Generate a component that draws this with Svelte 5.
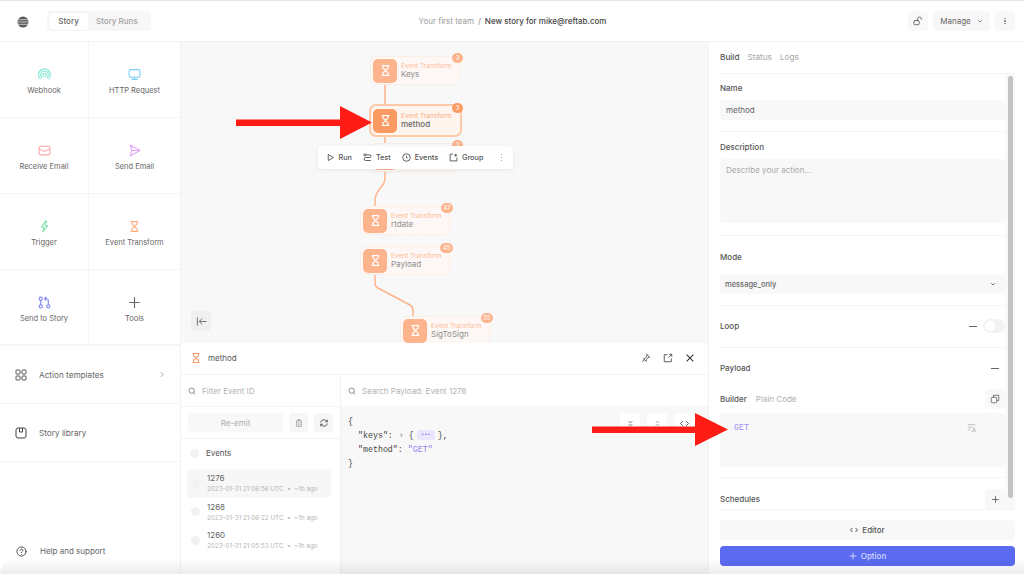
<script lang="ts">
	// Action palette, left sidebar
	const actions = [
		{ label: 'Webhook', icon: 'webhook', color: '#7fe6d2' },
		{ label: 'HTTP Request', icon: 'http', color: '#79cdf7' },
		{ label: 'Receive Email', icon: 'mail', color: '#fba6a6' },
		{ label: 'Send Email', icon: 'send', color: '#e3a6f7' },
		{ label: 'Trigger', icon: 'bolt', color: '#7fe3ad' },
		{ label: 'Event Transform', icon: 'hourglass', color: '#fdab7d' },
		{ label: 'Send to Story', icon: 'story', color: '#7d87ee' },
		{ label: 'Tools', icon: 'plus', color: '#666' }
	];

	// Nodes on the canvas, coordinates relative to the canvas
	// The third node sits under the toolbar, so its text can't be read
	const nodes = [
		{ name: 'Keys', x: 189, y: 14, badge: '3' },
		{ name: 'method', x: 189, y: 64, badge: '3', selected: true },
		{ name: '', x: 189, y: 101, badge: '3' },
		{ name: 'rtdate', x: 179, y: 164, badge: '47' },
		{ name: 'Payload', x: 179, y: 204, badge: '45' },
		{ name: 'SigToSign', x: 219, y: 274, badge: '55' }
	];

	const events = [
		{ id: '1276', time: '2023-01-31 21:06:56 UTC', active: true },
		{ id: '1268', time: '2023-01-31 21:06:22 UTC', active: false },
		{ id: '1260', time: '2023-01-31 21:05:53 UTC', active: false }
	];
</script>

{#snippet hourglass(color: string, size: number)}
	<svg width={size} height={size} viewBox="0 0 24 24" fill="none" stroke={color} stroke-width="2.2" stroke-linecap="round" stroke-linejoin="round">
		<path d="M6 3h12M6 21h12M7 3v3.5c0 2 5 4 5 5.500s-5 3.500-5 5.500V21M17 3v3.500c0 2-5 4-5 5.500s5 3.500 5 5.500V21" />
	</svg>
{/snippet}

{#snippet actionIcon(name: string, color: string)}
	<svg width="13" height="13" viewBox="0 0 24 24" fill="none" stroke={color} stroke-width="2" stroke-linecap="round" stroke-linejoin="round">
		{#if name === 'webhook'}
			<path d="M4 20a11 11 0 1 1 16 0M7.500 18a7 7 0 1 1 9 0M10.500 15.500a3 3 0 1 1 3 0" />
		{:else if name === 'http'}
			<rect x="2" y="3" width="20" height="14" rx="3" />
			<path d="M12 17v4M7 21h10" />
		{:else if name === 'mail'}
			<rect x="2" y="4" width="20" height="16" rx="3" />
			<path d="M2 9l10 5 10-5" />
		{:else if name === 'send'}
			<path d="M4 2l18 10L4 22l3-10zM7 12h15" />
		{:else if name === 'bolt'}
			<path d="M14 2L6 13h5l-2 9 9-12h-5l3-8z" />
		{:else if name === 'hourglass'}
			<path d="M6 3h12M6 21h12M7 3v3.500c0 2 5 4 5 5.500s-5 3.500-5 5.500V21M17 3v3.500c0 2-5 4-5 5.500s5 3.500 5 5.500V21" />
		{:else if name === 'story'}
			<circle cx="5" cy="5" r="3" />
			<circle cx="5" cy="19" r="3" />
			<circle cx="19" cy="19" r="3" />
			<path d="M5 8v8M19 16V8c0-2-1-3-3-3h-3M15 2l-3 3 3 3" />
		{:else}
			<path d="M12 3v18M3 12h18" />
		{/if}
	</svg>
{/snippet}

<div class="app">
	<header class="topbar">
		<div class="top-left">
			<svg class="logo" width="12" height="12" viewBox="0 0 12 12">
				<circle cx="6" cy="6" r="5.500" fill="#5a5a5a" />
				<path d="M1 3.700h10M.5 6h11M1 8.300h10" stroke="#ddd" stroke-width=".8" />
			</svg>
			<div class="segment">
				<span class="seg active">Story</span>
				<span class="seg">Story Runs</span>
			</div>
		</div>
		<div class="crumb">
			<span class="team">Your first team</span>
			<span class="slash">/</span>
			<span class="story">New story for mike@reftab.com</span>
		</div>
		<div class="top-right">
			<span class="square">
				<svg width="10" height="10" viewBox="0 0 24 24" fill="none" stroke="#555" stroke-width="2" stroke-linecap="round">
					<rect x="2" y="11" width="13" height="10" rx="3" />
					<path d="M11 11V7a4.500 4.500 0 0 1 9 0v1" />
				</svg>
			</span>
			<span class="manage">Manage
				<svg width="6" height="6" viewBox="0 0 12 12" fill="none" stroke="#777" stroke-width="1.800"><path d="M2.500 4.500L6 8l3.500-3.500" /></svg>
			</span>
			<span class="square dots"><i></i><i></i><i></i></span>
		</div>
	</header>

	<div class="body">
		<aside class="sidebar">
			<div class="palette">
				{#each actions as action}
					<div class="action">
						{@render actionIcon(action.icon, action.color)}
						<span>{action.label}</span>
					</div>
				{/each}
			</div>
			<div class="side-row">
				<svg width="12" height="12" viewBox="0 0 24 24" fill="none" stroke="#555" stroke-width="2">
					<rect x="2" y="2" width="8" height="8" rx="1.500" />
					<rect x="14" y="2" width="8" height="8" rx="1.500" />
					<rect x="2" y="14" width="8" height="8" rx="1.500" />
					<rect x="14" y="14" width="8" height="8" rx="1.500" />
				</svg>
				<span>Action templates</span>
				<svg class="chev" width="6" height="7" viewBox="0 0 8 12" fill="none" stroke="#999" stroke-width="1.500"><path d="M2 2l4 4-4 4" /></svg>
			</div>
			<div class="side-row">
				<svg width="12" height="12" viewBox="0 0 24 24" fill="none" stroke="#444" stroke-width="2">
					<rect x="2" y="2" width="20" height="20" rx="4" />
					<path d="M9 2v8h6V2" />
				</svg>
				<span>Story library</span>
			</div>
			<div class="help">
				<svg width="11" height="11" viewBox="0 0 24 24" fill="none" stroke="#444" stroke-width="2" stroke-linecap="round">
					<circle cx="12" cy="12" r="10" />
					<path d="M9 9.500a3 3 0 1 1 4.500 2.600c-1 .6-1.500 1.200-1.500 2.400M12 18v.1" />
				</svg>
				<span>Help and support</span>
			</div>
		</aside>

		<main class="center">
			<section class="canvas">
				<svg class="edges" width="527" height="301" fill="none" stroke="#fdb48c" stroke-width="1.500">
					<path d="M204 40v97c0 8-10 10-10 22v30" />
					<path d="M194 230v11c0 3 1 4 3 5l32 17c2 1 3 3 3 5v12" />
				</svg>
				{#each nodes as node}
					<div class="node" class:selected={node.selected} style="left: {node.x}px; top: {node.y}px">
						<span class="node-icon">{@render hourglass('#fff', 13)}</span>
						{#if node.name}
							<div class="node-text">
								<span class="node-type">Event Transform</span>
								<span class="node-name">{node.name}</span>
							</div>
						{/if}
						<span class="node-badge">{node.badge}</span>
					</div>
				{/each}
				<div class="toolbar">
					<span class="tool">
						<svg width="9" height="9" viewBox="0 0 24 24" fill="none" stroke="#444" stroke-width="2.200" stroke-linejoin="round"><path d="M6 4l14 8-14 8z" /></svg>Run
					</span>
					<span class="tool">
						<svg width="9" height="9" viewBox="0 0 24 24" fill="none" stroke="#444" stroke-width="2.200"><circle cx="5" cy="5" r="3" /><path d="M8 5h10a3 3 0 0 1 0 7H7a4 4 0 0 0 0 8h14" /></svg>Test
					</span>
					<span class="tool">
						<svg width="9" height="9" viewBox="0 0 24 24" fill="none" stroke="#444" stroke-width="2.200"><circle cx="12" cy="12" r="10" /><path d="M12 7v6h3" /></svg>Events
					</span>
					<span class="tool">
						<svg width="9" height="9" viewBox="0 0 24 24" fill="none" stroke="#444" stroke-width="2.200"><path d="M11 3H3v18h18v-9M18 2v8M14 6h8" /></svg>Group
					</span>
					<span class="tool-dots"><i></i><i></i><i></i></span>
				</div>
				<span class="collapse">
					<svg width="11" height="11" viewBox="0 0 24 24" fill="none" stroke="#666" stroke-width="2" stroke-linecap="round"><path d="M3 4v16M22 12H8M13 6l-6 6 6 6" /></svg>
				</span>
			</section>

			<section class="panel">
				<div class="panel-head">
					<div class="panel-title">
						{@render hourglass('#fb9a66', 12)}
						<span>method</span>
					</div>
					<div class="panel-actions">
						<svg width="10" height="10" viewBox="0 0 24 24" fill="none" stroke="#444" stroke-width="2" stroke-linejoin="round"><path d="M14 3l7 7-4 1-4 5-1 4-6-6 4-1 4-5zM8 16l-5 5" /></svg>
						<svg width="10" height="10" viewBox="0 0 24 24" fill="none" stroke="#444" stroke-width="2"><path d="M11 4H3v17h17v-8M13 11l8-8M15 3h6v6" /></svg>
						<svg width="10" height="10" viewBox="0 0 24 24" fill="none" stroke="#333" stroke-width="2.600"><path d="M4 4l16 16M20 4L4 20" /></svg>
					</div>
				</div>
				<div class="panel-body">
					<div class="events">
						<div class="search">
							<svg width="8" height="8" viewBox="0 0 24 24" fill="none" stroke="#777" stroke-width="2.500"><circle cx="11" cy="11" r="8" /><path d="M17 17l5 5" /></svg>
							<span>Filter Event ID</span>
						</div>
						<div class="emit-row">
							<span class="emit">Re-emit</span>
							<span class="mini">
								<svg width="8" height="8" viewBox="0 0 24 24" fill="none" stroke="#999" stroke-width="2.500"><path d="M5 5h14v17H5zM9 5V2h6v3M9 11h6M9 16h6" /></svg>
							</span>
							<span class="mini">
								<svg width="10" height="10" viewBox="0 0 24 24" fill="none" stroke="#555" stroke-width="2.200"><path d="M4 11a8 8 0 0 1 14-4l2 2M20 13a8 8 0 0 1-14 4l-2-2M20 4v5h-5M4 20v-5h5" /></svg>
							</span>
						</div>
						<div class="events-head"><i class="radio"></i><span>Events</span></div>
						<div class="event-list">
							{#each events as event}
								<div class="event" class:active={event.active}>
									<i class="radio"></i>
									<div class="event-text">
										<span class="event-id">{event.id}</span>
										<span class="event-time">{event.time} &nbsp;•&nbsp; ~1h ago</span>
									</div>
								</div>
							{/each}
						</div>
					</div>
					<div class="payload">
						<div class="search">
							<svg width="8" height="8" viewBox="0 0 24 24" fill="none" stroke="#777" stroke-width="2.500"><circle cx="11" cy="11" r="8" /><path d="M17 17l5 5" /></svg>
							<span>Search Payload: Event 1276</span>
						</div>
						<div class="json">
							<div class="json-tools">
								<span>
									<svg width="7" height="7" viewBox="0 0 12 12" fill="none" stroke="#444" stroke-width="1.300"><path d="M3 2l3 3 3-3M3 7l3 3 3-3" /></svg>
								</span>
								<span>
									<svg width="7" height="7" viewBox="0 0 12 12" fill="none" stroke="#888" stroke-width="1.300"><path d="M3 5l3-3 3 3M3 10l3-3 3 3" /></svg>
								</span>
								<span>
									<svg width="9" height="7" viewBox="0 0 16 12" fill="none" stroke="#333" stroke-width="1.500"><path d="M5 2L1 6l4 4M11 2l4 4-4 4" /></svg>
								</span>
							</div>
							<div class="code">
								<div class="line">&#123;</div>
								<div class="line indent">
									<span>"keys":</span>
									<span class="caret">›</span>
									<span>&#123;</span>
									<span class="more">•••</span>
									<span>&#125;,</span>
								</div>
								<div class="line indent">
									<span>"method":</span>
									<span class="str">"GET"</span>
								</div>
								<div class="line">&#125;</div>
							</div>
						</div>
					</div>
				</div>
			</section>
		</main>

		<aside class="inspector">
			<nav class="tabs">
				<span class="tab active">Build</span>
				<span class="tab">Status</span>
				<span class="tab">Logs</span>
			</nav>
			<div class="scroll">
				<div class="form">
					<div class="group name-group">
						<span class="label">Name</span>
						<div class="field">method</div>
					</div>
					<div class="group desc-group">
						<span class="label">Description</span>
						<div class="field area">Describe your action...</div>
					</div>
					<div class="group mode-group">
						<span class="label">Mode</span>
						<div class="field select">
							<span>message_only</span>
							<svg width="6" height="6" viewBox="0 0 12 12" fill="none" stroke="#666" stroke-width="1.800"><path d="M2.500 4.500L6 8l3.500-3.500" /></svg>
						</div>
					</div>
					<div class="group row-group">
						<span class="label">Loop</span>
						<div class="loop-ctl">
							<i class="dash"></i>
							<span class="switch"><i></i></span>
						</div>
					</div>
					<div class="group payload-group">
						<div class="payload-head">
							<span class="label">Payload</span>
							<i class="dash"></i>
						</div>
						<div class="builder-head">
							<span class="builder-tab active">Builder</span>
							<span class="builder-tab">Plain Code</span>
							<span class="copy">
								<svg width="10" height="10" viewBox="0 0 24 24" fill="none" stroke="#555" stroke-width="1.800"><rect x="3" y="8" width="13" height="13" rx="2" /><path d="M8 8V3h13v13h-5" /></svg>
							</span>
						</div>
						<div class="builder">
							<span class="get">GET</span>
							<svg class="format" width="10" height="10" viewBox="0 0 24 24" fill="none" stroke="#bbb" stroke-width="2"><path d="M2 4h18M2 10h12M2 16h6M12 22l5-11 5 11M14 19h6" /></svg>
						</div>
					</div>
					<div class="group sched-group">
						<span class="label">Schedules</span>
						<span class="copy">
							<svg width="9" height="9" viewBox="0 0 24 24" fill="none" stroke="#555" stroke-width="2.200"><path d="M12 3v18M3 12h18" /></svg>
						</span>
					</div>
				</div>
				<div class="scrollbar"><i></i></div>
			</div>
			<div class="footer">
				<button class="editor">
					<svg width="8" height="6" viewBox="0 0 16 12" fill="none" stroke="#444" stroke-width="1.800"><path d="M5 2L1 6l4 4M11 2l4 4-4 4" /></svg>
					Editor
				</button>
				<button class="option">
					<svg width="8" height="8" viewBox="0 0 12 12" fill="none" stroke="#d5daff" stroke-width="1.400"><path d="M6 1v10M1 6h10" /></svg>
					Option
				</button>
			</div>
		</aside>
	</div>

	<!-- Annotation arrows drawn over the screenshot -->
	<svg class="arrow arrow-one" width="136" height="33" viewBox="0 0 136 33">
		<path d="M0 13.500h104V0l32 16.500-32 16.500V20H0z" fill="#fe1c14" />
	</svg>
	<svg class="arrow arrow-two" width="136" height="33" viewBox="0 0 136 33">
		<path d="M0 13.500h103V0l33 16.500-33 16.500V20H0z" fill="#fe1c14" />
	</svg>
	<div class="fade"></div>
</div>

<style>
	:global(body) {
		margin: 0;
		background: #fff;
	}

	.app {
		position: relative;
		width: 1024px;
		height: 574px;
		overflow: hidden;
		display: flex;
		flex-direction: column;
		font-family: Inter, 'Liberation Sans', sans-serif;
		font-size: 8px;
		color: #555;
		border-top: 1px solid #e6e6e6;
		box-sizing: border-box;
	}

	i {
		display: block;
		font-style: normal;
	}

	/* Top bar */
	.topbar {
		height: 40px;
		flex-shrink: 0;
		display: grid;
		grid-template-columns: 1fr auto 1fr;
		align-items: center;
		border-bottom: 1px solid #f2f2f2;
		box-sizing: content-box;
	}

	.top-left {
		display: flex;
		align-items: center;
		padding-left: 17px;
		gap: 18px;
	}

	.logo {
		margin-top: 1px;
	}

	.segment {
		display: flex;
		align-items: center;
		height: 20px;
		width: 104px;
		background: #f7f7f7;
		border-radius: 4px;
		padding: 0 2px;
		box-sizing: border-box;
	}

	.seg {
		height: 17px;
		display: flex;
		align-items: center;
		padding: 0 8px;
		font-weight: 500;
		color: #a2a2a2;
	}

	.seg.active {
		width: 39px;
		box-sizing: border-box;
		justify-content: center;
		background: #fff;
		color: #666;
		border-radius: 3px;
		box-shadow: 0 0 2px rgba(0, 0, 0, 0.06);
	}

	.crumb {
		display: flex;
		gap: 4px;
		transform: translateX(0.500px);
	}

	.team {
		color: #9b9b9b;
	}

	.slash {
		color: #888;
	}

	.story {
		color: #444;
		font-weight: 500;
	}

	.top-right {
		display: flex;
		justify-content: flex-end;
		align-items: center;
		gap: 5px;
		padding-right: 9px;
	}

	.square {
		width: 20px;
		height: 20px;
		display: flex;
		flex-direction: column;
		gap: 1.500px;
		align-items: center;
		justify-content: center;
		background: #f8f8f8;
		border-radius: 4px;
	}

	.dots i,
	.tool-dots i {
		width: 1.200px;
		height: 1.200px;
		border-radius: 50%;
		background: #888;
	}

	.manage {
		width: 57px;
		height: 20px;
		display: flex;
		align-items: center;
		justify-content: center;
		gap: 6px;
		background: #f7f7f7;
		border-radius: 4px;
		color: #666;
	}

	.body {
		flex: 1;
		display: flex;
		min-height: 0;
	}

	/* Sidebar */
	.sidebar {
		width: 181px;
		flex-shrink: 0;
		display: flex;
		flex-direction: column;
		border-right: 1px solid #f3f3f3;
		box-sizing: border-box;
	}

	.palette {
		display: grid;
		grid-template-columns: 89px 1fr;
		grid-auto-rows: 76px;
	}

	.action {
		display: flex;
		flex-direction: column;
		align-items: center;
		justify-content: center;
		gap: 5px;
		padding-top: 4px;
		box-sizing: border-box;
		border-bottom: 1px solid #f5f5f5;
		color: #666;
		font-size: 7.500px;
	}

	.action:nth-child(odd) {
		border-right: 1px solid #f5f5f5;
	}

	.action:nth-last-child(-n + 2) {
		border-bottom: 2px solid #f5f5f5;
	}

	.side-row {
		height: 58px;
		display: flex;
		align-items: center;
		gap: 12px;
		padding: 0 15px;
		box-sizing: border-box;
		font-size: 8.200px;
		color: #666;
		border-bottom: 1px solid #f5f5f5;
	}

	.chev {
		margin-left: auto;
	}

	.help {
		margin-top: auto;
		height: 46px;
		display: flex;
		align-items: center;
		gap: 13px;
		padding: 0 16px 0;
		color: #666;
	}

	/* Canvas */
	.center {
		width: 527px;
		flex-shrink: 0;
		display: flex;
		flex-direction: column;
	}

	.canvas {
		position: relative;
		height: 301px;
		flex-shrink: 0;
		overflow: hidden;
		background-color: #f8f8f8;
		background-image: radial-gradient(circle, #e9e9e9 0.6px, transparent 0.8px);
		background-size: 12.500px 12.500px;
	}

	.edges {
		position: absolute;
		left: 0;
		top: 0;
	}

	.node {
		position: absolute;
		width: 90px;
		height: 29px;
		box-sizing: border-box;
		display: flex;
		align-items: center;
		gap: 4px;
		padding-left: 2px;
		background: #fdf8f5;
		border: 1px solid #fbeee6;
		border-radius: 7px;
	}

	.node.selected {
		margin: -2px 0 0 -1px;
		width: 93px;
		height: 33px;
		padding-left: 2px;
		background: #fef5ef;
		border: 2px solid #fdc9a9;
	}

	.node-icon {
		width: 24px;
		height: 24px;
		flex-shrink: 0;
		display: flex;
		align-items: center;
		justify-content: center;
		background: #fdb48c;
		border-radius: 5px;
	}

	.node.selected .node-icon {
		background: #fc9a63;
	}

	.node-text {
		display: flex;
		flex-direction: column;
		line-height: 8.500px;
		margin-top: -1px;
		min-width: 0;
		white-space: nowrap;
	}

	.node-type {
		font-size: 6.500px;
		color: #fdbb97;
	}

	.node-name {
		font-size: 8px;
		color: #8d8d8d;
	}

	.node.selected .node-name {
		color: #666;
		font-weight: 500;
	}

	.node.selected .node-type {
		color: #fdab7d;
	}

	.node-badge {
		position: absolute;
		right: -4px;
		top: -4px;
		min-width: 11px;
		height: 10px;
		padding: 0 2.500px;
		box-sizing: border-box;
		border-radius: 5px;
		background: #fdb48c;
		color: #fff;
		font-size: 6px;
		line-height: 10px;
		text-align: center;
	}

	.node.selected .node-badge {
		right: -3px;
		top: -3px;
		background: #fc9a63;
	}

	.toolbar {
		position: absolute;
		left: 137px;
		top: 104px;
		width: 195px;
		height: 23px;
		box-sizing: border-box;
		display: flex;
		align-items: center;
		justify-content: space-between;
		padding: 0 11px 0 8px;
		background: #fff;
		border-radius: 4px;
		box-shadow: 0 1px 5px rgba(0, 0, 0, 0.07);
		font-size: 7.300px;
	}

	.tool {
		display: flex;
		align-items: center;
		gap: 3.500px;
		color: #555;
		font-weight: 500;
	}

	.tool-dots {
		display: flex;
		flex-direction: column;
		gap: 1.500px;
		margin-left: 6px;
	}

	.collapse {
		position: absolute;
		left: 10px;
		top: 269px;
		width: 20px;
		height: 20px;
		display: flex;
		align-items: center;
		justify-content: center;
		background: #f0f0f0;
		border-radius: 4px;
	}

	/* Bottom panel */
	.panel {
		flex: 1;
		min-height: 0;
		display: flex;
		flex-direction: column;
		background: #fff;
	}

	.panel-head {
		height: 32px;
		flex-shrink: 0;
		display: flex;
		align-items: center;
		justify-content: space-between;
		padding: 0 13px 2px 9px;
		box-sizing: border-box;
		border-bottom: 1px solid #f3f3f3;
	}

	.panel-title {
		display: flex;
		align-items: center;
		gap: 6px;
		color: #555;
	}

	.panel-actions {
		display: flex;
		gap: 12px;
	}

	.panel-body {
		flex: 1;
		min-height: 0;
		display: flex;
	}

	.events {
		width: 160px;
		flex-shrink: 0;
		box-sizing: border-box;
		border-right: 1px solid #f2f2f2;
	}

	.search {
		height: 31px;
		display: flex;
		align-items: center;
		gap: 6px;
		padding-left: 7px;
		color: #b3b3b3;
	}

	.emit-row {
		height: 33px;
		box-sizing: border-box;
		display: flex;
		align-items: center;
		gap: 6px;
		padding-left: 7px;
		border-top: 1px solid #f5f5f5;
		border-bottom: 1px solid #f3f3f3;
	}

	.emit {
		width: 95px;
		height: 19px;
		display: flex;
		align-items: center;
		justify-content: center;
		background: #f8f8f8;
		border-radius: 4px;
		color: #b0b0b0;
	}

	.mini {
		width: 19px;
		height: 19px;
		display: flex;
		align-items: center;
		justify-content: center;
		background: #f6f6f6;
		border-radius: 4px;
	}

	.radio {
		width: 9px;
		height: 9px;
		flex-shrink: 0;
		border-radius: 50%;
		background: #f1f1f1;
	}

	.events-head {
		height: 30px;
		margin-top: -1px;
		display: flex;
		align-items: center;
		gap: 7px;
		padding-left: 9px;
		color: #555;
	}

	.event-list {
		display: flex;
		flex-direction: column;
		padding: 0 9px 0 6px;
		margin-top: 1px;
	}

	.event {
		height: 28.500px;
		display: flex;
		align-items: center;
		gap: 7px;
		padding-left: 4px;
		border-radius: 4px;
	}

	.event.active {
		background: #f7f7f7;
	}

	.event-text {
		display: flex;
		flex-direction: column;
		gap: 2px;
		white-space: nowrap;
	}

	.event-id {
		font-size: 8px;
		line-height: 10px;
		color: #666;
	}

	.event-time {
		font-size: 6.300px;
		line-height: 8px;
		color: #b5b5b5;
	}

	.payload {
		flex: 1;
		min-width: 0;
		display: flex;
		flex-direction: column;
	}

	.payload .search {
		flex-shrink: 0;
	}

	.json {
		position: relative;
		flex: 1;
		background: #f8f8f8;
	}

	.json-tools {
		position: absolute;
		right: 14px;
		top: 7px;
		display: flex;
		gap: 7px;
	}

	.json-tools span {
		width: 20px;
		height: 20px;
		display: flex;
		align-items: center;
		justify-content: center;
		background: #fff;
		border-radius: 4px;
	}

	.code {
		padding: 8px 7px;
		font-family: 'Liberation Mono', monospace;
		font-size: 8.300px;
		color: #444;
	}

	.line {
		display: flex;
		align-items: center;
		gap: 5px;
		height: 14px;
		white-space: pre;
	}

	.line.indent {
		padding-left: 10px;
	}

	.caret {
		color: #777;
		margin-left: 1px;
	}

	.more {
		display: inline-block;
		width: 18px;
		height: 10px;
		line-height: 10px;
		text-align: center;
		font-size: 5px;
		border-radius: 3px;
		background: #e9e6fd;
		color: #7a68ee;
		margin: 0 -2px;
	}

	.str {
		color: #8d7ff5;
	}

	/* Right inspector */
	.inspector {
		flex: 1;
		min-width: 0;
		display: flex;
		flex-direction: column;
		padding-left: 1px;
		border-left: 1px solid #f3f3f3;
		box-sizing: border-box;
	}

	.tabs {
		height: 32px;
		flex-shrink: 0;
		display: flex;
		align-items: center;
		gap: 8px;
		margin: 0 9px 0 10px;
		padding-bottom: 1px;
		font-size: 8.200px;
		color: #a6a6a6;
		border-bottom: 1px solid #f5f5f5;
		box-sizing: border-box;
	}

	.tab.active {
		color: #555;
		font-weight: 500;
	}

	.scroll {
		height: 436px;
		flex-shrink: 0;
		display: flex;
		margin: 0 9px 0 10px;
		border-bottom: 1px solid #f5f5f5;
		box-sizing: border-box;
	}

	.form {
		flex: 1;
		min-width: 0;
	}

	.scrollbar {
		width: 10px;
		flex-shrink: 0;
		background: #f9f9f9;
		padding: 2px 2.500px 0;
		box-sizing: border-box;
	}

	.scrollbar i {
		width: 5px;
		height: 422px;
		border-radius: 3px;
		background: #c2c2c2;
	}

	.group {
		box-sizing: border-box;
		border-bottom: 1px solid #f5f5f5;
	}

	.label {
		display: block;
		font-weight: 500;
		line-height: 10px;
		color: #555;
	}

	.field {
		height: 20px;
		margin-top: 7px;
		display: flex;
		align-items: center;
		padding: 0 6px;
		background: #f8f8f8;
		border-radius: 4px;
		color: #666;
	}

	.name-group {
		height: 58px;
		padding-top: 9px;
	}

	.desc-group {
		height: 104px;
		padding-top: 10px;
	}

	.field.area {
		height: 64px;
		margin-top: 7px;
		align-items: flex-start;
		padding-top: 6px;
		box-sizing: border-box;
		color: #a8a8a8;
	}

	.mode-group {
		height: 70px;
		padding-top: 16px;
	}

	.field.select {
		margin-top: 12px;
		justify-content: space-between;
		padding: 0 9px 0 5px;
		font-size: 7.500px;
		font-weight: 500;
	}

	.row-group {
		height: 42px;
		padding-bottom: 1px;
		display: flex;
		align-items: center;
		justify-content: space-between;
	}

	.loop-ctl {
		display: flex;
		align-items: center;
		gap: 6px;
	}

	.dash {
		width: 8px;
		height: 1px;
		background: #666;
	}

	.switch {
		width: 22px;
		height: 14px;
		display: flex;
		align-items: center;
		padding-left: 2px;
		box-sizing: border-box;
		border-radius: 7px;
		background: #f3f3f3;
	}

	.switch i {
		width: 10px;
		height: 10px;
		border-radius: 50%;
		background: #fff;
	}

	.payload-group {
		height: 130px;
		padding-top: 15px;
	}

	.payload-head {
		display: flex;
		align-items: center;
		justify-content: space-between;
		padding-right: 6px;
	}

	.builder-head {
		display: flex;
		align-items: center;
		gap: 9px;
		height: 20px;
		margin-top: 16px;
		color: #b0b0b0;
	}

	.builder-tab.active {
		font-weight: 500;
		color: #555;
	}

	.copy {
		width: 20px;
		height: 20px;
		display: flex;
		align-items: center;
		justify-content: center;
		margin-left: auto;
		background: #f8f8f8;
		border-radius: 4px;
	}

	.builder {
		position: relative;
		height: 54px;
		margin-top: 4px;
		padding: 9px 14px;
		box-sizing: border-box;
		background: #f8f8f8;
		border-radius: 4px;
	}

	.get {
		font-family: 'Liberation Mono', monospace;
		font-size: 8.300px;
		color: #a08cf7;
	}

	.format {
		position: absolute;
		left: 247px;
		top: 10px;
	}

	.sched-group {
		height: 32px;
		padding-top: 10px;
		display: flex;
		align-items: center;
		justify-content: space-between;
		border-bottom: 0;
	}

	.footer {
		display: flex;
		flex-direction: column;
		gap: 6px;
		padding: 10px 9px 0 10px;
	}

	button {
		height: 20px;
		border: 0;
		border-radius: 4px;
		display: flex;
		align-items: center;
		justify-content: center;
		gap: 4px;
		padding: 0;
		font-family: inherit;
		font-size: 8px;
		font-weight: 500;
	}

	.editor {
		background: #f8f8f8;
		color: #555;
	}

	.option {
		background: #5b6bf1;
		color: #d5daff;
	}

	/* Overlays */
	.arrow {
		position: absolute;
	}

	.arrow-one {
		left: 236px;
		top: 105px;
	}

	.arrow-two {
		left: 592px;
		top: 412px;
	}

	.fade {
		position: absolute;
		left: 0;
		right: 0;
		bottom: 0;
		height: 16px;
		border-radius: 40px 0 0 0;
		background: linear-gradient(rgba(0, 0, 0, 0), rgba(0, 0, 0, 0.07));
		pointer-events: none;
	}
</style>
